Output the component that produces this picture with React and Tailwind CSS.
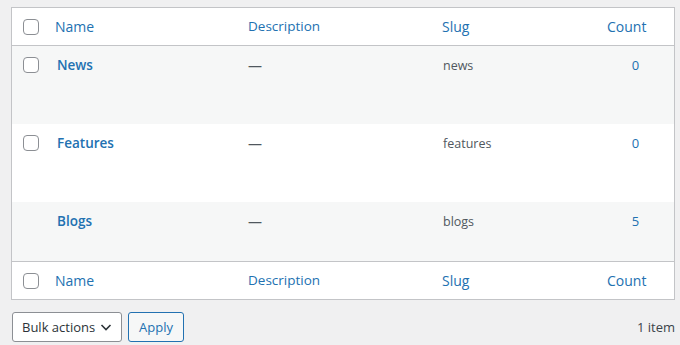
const rows = [
  { name: "News", slug: "news", count: 0, alt: true, cb: true, h: "h-[78px]" },
  { name: "Features", slug: "features", count: 0, alt: false, cb: true, h: "h-[78px]" },
  { name: "Blogs", slug: "blogs", count: 5, alt: true, cb: false, h: "h-[59px]" },
];

const grid = "grid grid-cols-[33px_193px_194px_165px_1fr]";

function Checkbox() {
  return <span className="block w-4 h-4 rounded-[4px] border border-[#8c8f94] bg-white" />;
}

function HeadRow({ border }) {
  return (
    <div className={`${grid} h-[38px] items-center bg-white ${border}`}>
      <div className="pl-[11px]">
        <Checkbox />
      </div>
      <div className="pl-[10px] text-[#2271b1]">Name</div>
      <div className="pl-[10px] text-[#2271b1] text-[13.5px]">Description</div>
      <div className="pl-[10px] text-[#2271b1]">Slug</div>
      <div className="pl-[10px] text-[#2271b1]">Count</div>
    </div>
  );
}

export default function App() {
  return (
    <div
      className="min-h-screen bg-[#f0f0f1] pl-[11px] pr-[5px] pt-[7px] text-[14px] leading-[21px] text-[#3c434a]"
      style={{ fontFamily: '"Open Sans", "Noto Sans", sans-serif' }}
    >
      <div className="border border-[#c3c4c7] bg-white">
        <HeadRow border="border-b border-[#c3c4c7]" />
        {rows.map((r) => (
          <div key={r.name} className={`${grid} ${r.h} ${r.alt ? "bg-[#f6f7f7]" : "bg-white"}`}>
            <div className="pl-[11px] pt-[11px]">{r.cb && <Checkbox />}</div>
            <div className="pl-[12px] pt-[9px] text-[13.5px] font-semibold text-[#2271b1]">{r.name}</div>
            <div className="pl-[10px] pt-[9px] text-[#50575e]">—</div>
            <div className="pl-[11px] pt-[9px] text-[12.5px] text-[#50575e]">{r.slug}</div>
            <div className="pt-[9px] text-center text-[13px] text-[#2271b1]">{r.count}</div>
          </div>
        ))}
        <HeadRow border="border-t border-[#c3c4c7]" />
      </div>
      <div className="flex items-center mt-[12px]">
        <div className="ml-px flex items-center justify-between w-[110px] h-[30px] pl-[9px] pr-[8px] bg-white border border-[#8c8f94] rounded-[3px] text-[13px] text-[#2c3338]">
          <span>Bulk actions</span>
          <svg width="14" height="14" viewBox="0 0 14 14" fill="none">
            <path d="M2.5 5l4.5 4.5L11.5 5" stroke="#2c3338" strokeWidth="1.6" />
          </svg>
        </div>
        <button className="ml-[6px] w-[56px] h-[30px] bg-[#f6f7f7] border border-[#2271b1] rounded-[3px] text-[#2271b1] text-[13px]">
          Apply
        </button>
        <div className="ml-auto text-[13px] text-[#3c434a]">1 item</div>
      </div>
    </div>
  );
}
